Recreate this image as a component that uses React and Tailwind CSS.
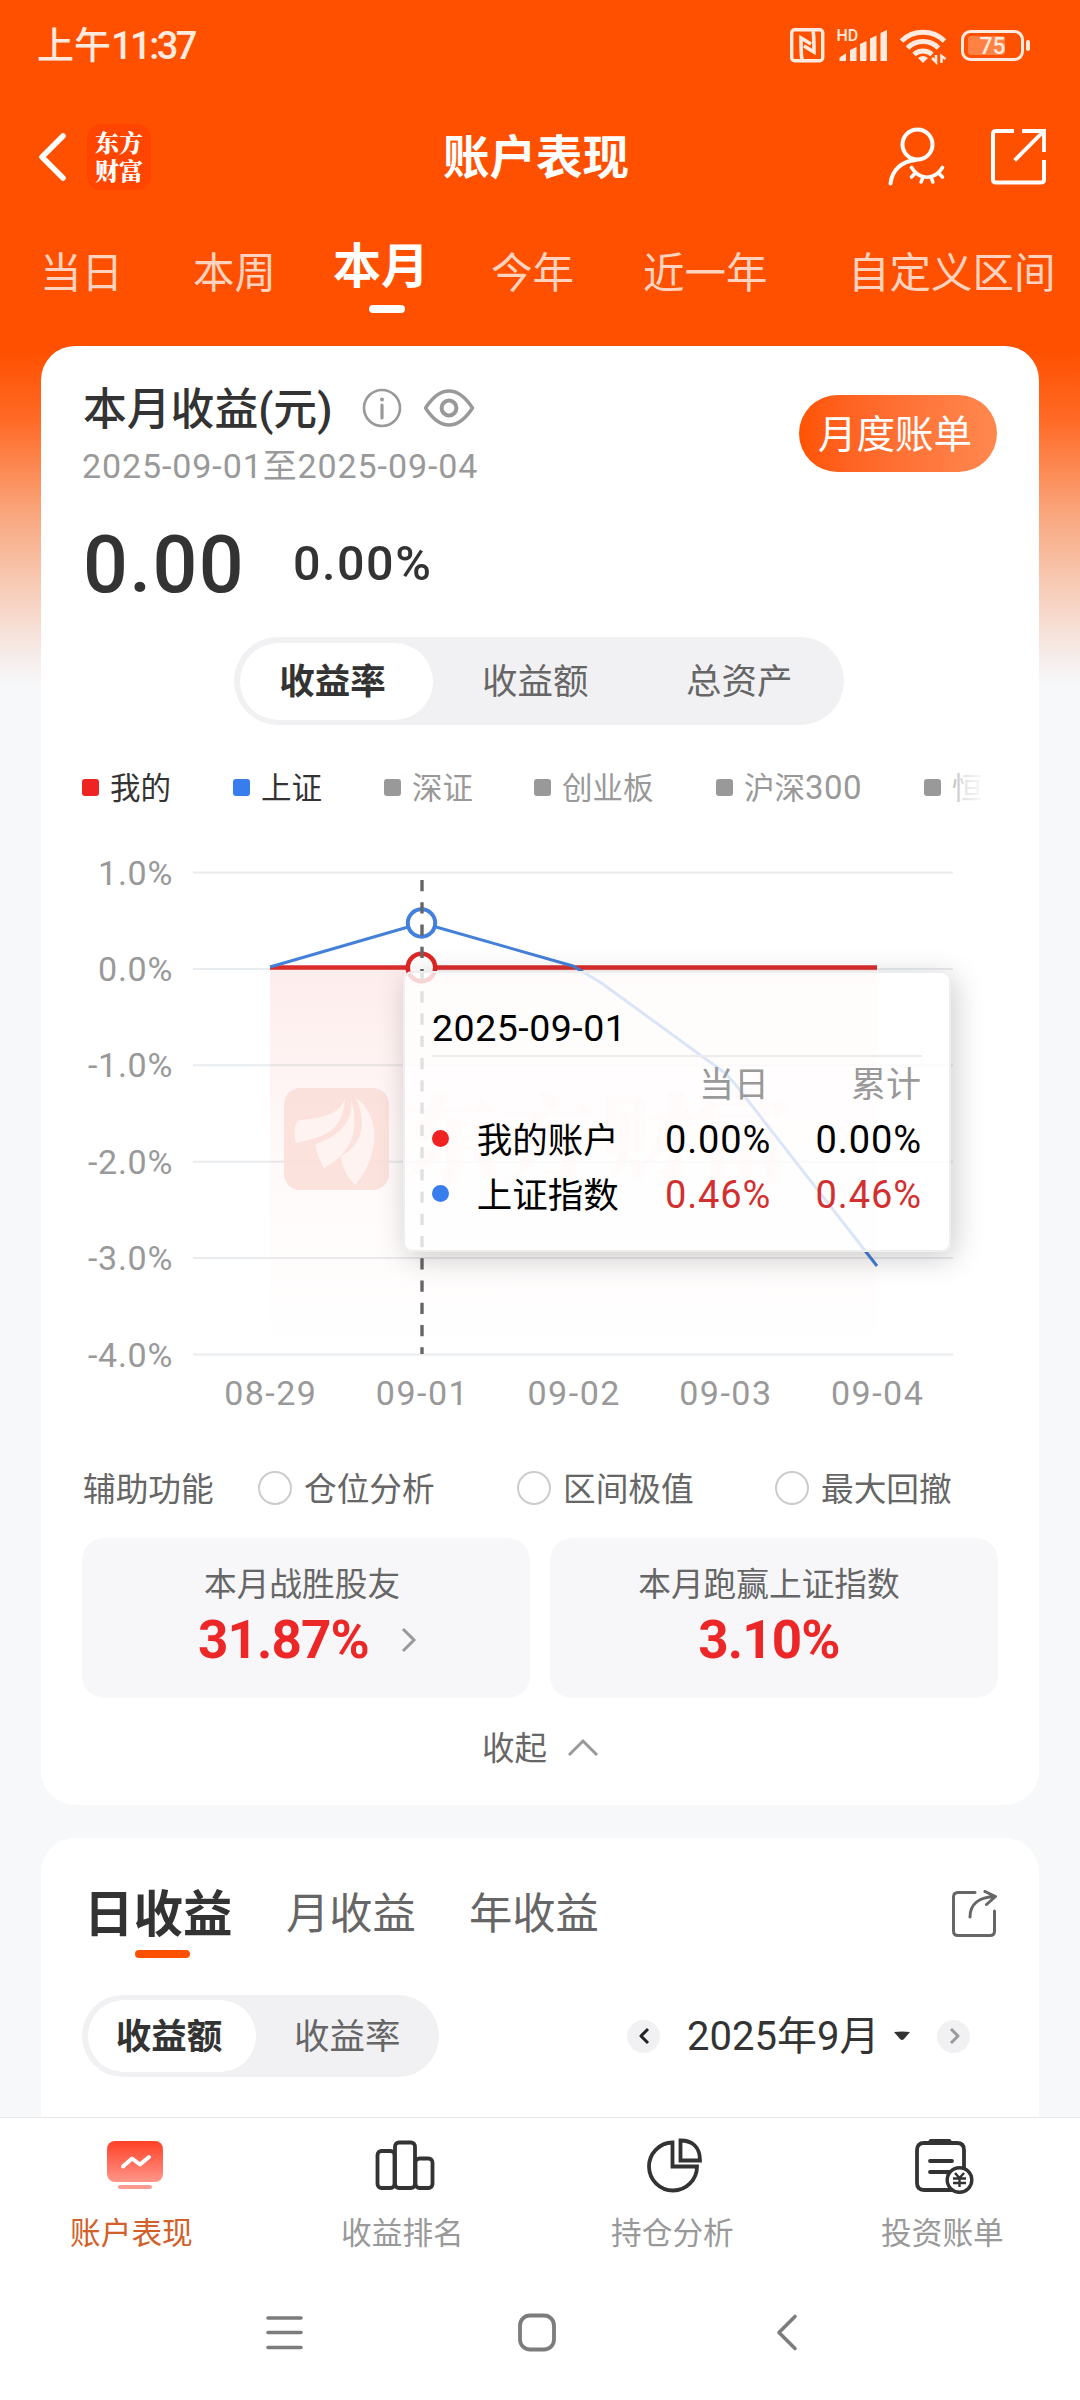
import React from "react";

const periods = [
  { label: "当日", cls: "ml-[40px] w-[153px]" },
  { label: "本周", cls: "w-[140px]" },
  { label: "本月", cls: "w-[158px]", active: true },
  { label: "今年", cls: "w-[152px]" },
  { label: "近一年", cls: "w-[205px]" },
  { label: "自定义区间", cls: "" },
];

const legend = [
  { label: "我的", box: "bg-[#f02323]", text: "text-[#333]", cls: "w-[151px]" },
  { label: "上证", box: "bg-[#387ded]", text: "text-[#333]", cls: "w-[151px]" },
  { label: "深证", box: "bg-[#999]", text: "text-[#999]", cls: "w-[150px]" },
  { label: "创业板", box: "bg-[#999]", text: "text-[#999]", cls: "w-[182px]" },
  { label: "沪深300", box: "bg-[#999]", text: "text-[#999]", cls: "w-[208px]" },
  { label: "恒", box: "bg-[#999]", text: "text-[#999]", cls: "w-[64px]" },
];

function StatusBar() {
  return (
    <div className="flex h-[90px] items-center pl-[37px] text-[#ffeadf]">
      <span className="mt-[3px] w-[751px] whitespace-nowrap text-[37px] font-medium leading-[40px]">
        上午<span className="text-[38px] tracking-[-2.500px]">11:37</span>
      </span>
      <svg width="244" height="44" viewBox="788 24 244 44" fill="none" stroke="currentColor" className="mt-[2px]">
        <rect x="791.700" y="29.700" width="31" height="31" rx="3" strokeWidth="3.400" />
        <path d="M802 60c-1-5-1-17-1-22l10 6M813 30c1 5 1 17 1 22l-10-6" strokeWidth="3.600" />
        <text x="836.500" y="40.500" fontSize="16" fontWeight="500" fill="currentColor" stroke="none">HD</text>
        <g fill="currentColor" stroke="none">
          <path d="M839.500 61v-3.500l6.500-4V61z" />
          <path d="M850 61V50l6.500-3V61z" />
          <path d="M860 61V44l6.500-3V61z" />
          <path d="M870 61V38.500l6.500-3V61z" />
          <path d="M880.500 61V33l6.500-3V61z" />
        </g>
        <g strokeWidth="5">
          <path d="M901.500 41a31 31 0 0 1 43 0" />
          <path d="M907.500 48a22 22 0 0 1 31 0" />
          <path d="M914 54.500a13.500 13.500 0 0 1 18 0" />
        </g>
        <path d="M918 58q5-4 10 0l-5 5z" fill="currentColor" stroke="none" />
        <path d="M936 55v7l-4-4M941.500 63v-7l4 3" strokeWidth="2.600" />
        <rect x="962.500" y="31.500" width="60" height="28" rx="8" strokeWidth="3" />
        <rect x="968" y="36" width="37" height="19" rx="3" fill="#ff8244" stroke="none" />
        <path d="M1028 42v7" strokeWidth="4" strokeLinecap="round" />
        <text x="979.500" y="54" fontSize="23" fontWeight="500" fill="currentColor" stroke="none">75</text>
      </svg>
    </div>
  );
}

function NavBar() {
  return (
    <div className="flex h-[134px] items-center text-white">
      <svg width="32" height="54" viewBox="0 0 32 54" className="ml-[37px]" fill="none" stroke="currentColor" strokeWidth="5.500" strokeLinecap="round" strokeLinejoin="round">
        <path d="M26 6 L5 27 L26 48" />
      </svg>
      <div className="ml-[18px] flex h-[66px] w-[64px] flex-col items-center justify-center rounded-[14px] bg-[#ff4500] text-[24px] font-black leading-[28px] [font-family:'Noto_Serif_CJK_SC','Noto_Sans_CJK_SC',serif]">
        <span className="relative top-[-1px]">东方</span>
        <span className="relative top-[-1px]">财富</span>
      </div>
      <span className="ml-[292px] mt-[2px] w-[186px] whitespace-nowrap text-[46.500px] font-bold leading-[50px]">账户表现</span>
      <svg width="62" height="62" viewBox="886 125 62 62" className="ml-[257px] mt-[-2px]" fill="none" stroke="currentColor" strokeWidth="4" strokeLinecap="round">
        <circle cx="917.500" cy="144.500" r="15" />
        <path d="M916 160C902 161 892 170 890.500 183.500" />
        <path d="M911.500 167.500c8 13 23 13 31 0M916 172.500l-4.500 4.500M923 177l-1.800 5M931 177l1.800 5M938 172.500l4.500 4.500" strokeWidth="3.600" />
      </svg>
      <svg width="60" height="60" viewBox="989 126 60 60" className="ml-[41px] mt-[-2px]" fill="none" stroke="currentColor" strokeWidth="4">
        <path d="M1014 131H996q-3 0-3 3v45.500q0 3 3 3h45q3 0 3-3V160" />
        <path d="M1024 131h20v19M1043 132L1016 159" strokeLinecap="square" strokeWidth="3.800" />
      </svg>
    </div>
  );
}

function PeriodTabs() {
  return (
    <div className="flex h-[122px] items-start whitespace-nowrap">
      {periods.map((p) =>
        p.active ? (
          <div key={p.label} className={`${p.cls} pt-[16px] text-[48px] font-bold leading-[54px] text-white`}>
            {p.label}
            <div className="ml-[36px] mt-[11px] h-[8px] w-[36px] rounded-full bg-white" />
          </div>
        ) : (
          <div key={p.label} className={`${p.cls} pt-[25px] text-[41.500px] leading-[50px] text-[#ffd3bf]`}>{p.label}</div>
        )
      )}
    </div>
  );
}

function Chart() {
  const rows = ["1.0%", "0.0%", "-1.0%", "-2.0%", "-3.0%", "-4.0%"];
  const days = ["08-29", "09-01", "09-02", "09-03", "09-04"];
  return (
    <svg width="998" height="590" viewBox="41 830 998 590" className="block" fill="none">
      <defs>
        <linearGradient id="area" x1="0" y1="0" x2="0" y2="1">
          <stop offset="0" stopColor="#f02323" stopOpacity="0.085" />
          <stop offset="0.5" stopColor="#f05023" stopOpacity="0.03" />
          <stop offset="1" stopColor="#f05023" stopOpacity="0" />
        </linearGradient>
      </defs>
      {rows.map((r, i) => (
        <g key={r}>
          <path d={`M193 ${872.500 + i * 96.400}H953`} stroke="#e9ecef" strokeWidth="2" />
          <text x="173" y={884.500 + i * 96.400} fontSize="34" letterSpacing="0.700" fill="#999" textAnchor="end">{r}</text>
        </g>
      ))}
      {days.map((d, i) => (
        <text key={d} x={270.800 + i * 151.700} y="1404.500" fontSize="34" letterSpacing="1.500" fill="#999" textAnchor="middle">{d}</text>
      ))}
      <rect x="270" y="968" width="607" height="386" fill="url(#area)" />
      <rect x="284" y="1088" width="105" height="102" rx="16" fill="#fbdfd9" fillOpacity="0.9" />
      <g fill="#fef3f1">
        <path d="M345 1098C342 1110 330 1118 300 1120C294 1122 293 1134 296 1143C318 1137 343 1136 345 1098Z" />
        <path d="M350 1096C357 1122 335 1138 316 1144C316 1154 321 1162 324 1168C342 1158 364 1140 350 1096Z" />
        <path d="M356 1098C370 1130 357 1148 341 1156C342 1170 349 1178 355 1185C372 1168 388 1122 356 1098Z" />
      </g>
      <text x="402" y="1175" fontSize="98" fontWeight="900" fill="#f05023" fillOpacity="0.075" fontFamily="'Noto Serif CJK SC','Noto Sans CJK SC'">东方财富</text>
      <path d="M270 967.500H877" stroke="#dc2d2d" strokeWidth="4.500" />
      <path d="M270 967L422 923L573 966L600 982L725 1073L735 1084L877 1266" stroke="#4580d8" strokeWidth="3" strokeLinejoin="round" />
      <circle cx="421.500" cy="923" r="13.700" fill="#fff" stroke="#4380de" strokeWidth="4" />
      <circle cx="421.500" cy="967.500" r="13.700" fill="#fff" stroke="#e02626" strokeWidth="4.500" />
      <path d="M422 880V1354" stroke="#666" strokeWidth="3.400" strokeDasharray="11.200 11.050" />
    </svg>
  );
}

function TooltipRow({ dot, name, day, total, color }) {
  return (
    <div className="flex h-[55px] items-center whitespace-nowrap text-[35.500px] leading-[50px]">
      <span className={`size-[17px] rounded-full ${dot}`} />
      <span className="ml-[28px] mt-[4px] w-[152px] text-black">{name}</span>
      <span className={`mt-[2px] w-[145px] text-right text-[38px] tracking-[0.900px] ${color}`}>{day}</span>
      <span className={`mt-[2px] w-[152px] text-right text-[38px] tracking-[0.900px] ${color}`}>{total}</span>
    </div>
  );
}

function Tooltip() {
  return (
    <div className="absolute left-[362px] top-[141px] h-[281px] w-[548px] rounded-[9px] border-2 border-[#eee] bg-white/80 px-[27px] pt-[32px] shadow-[4px_6px_30px_rgba(0,0,0,0.2)]">
      <div className="h-[52px] border-b-2 border-[#ebebeb] text-[37.500px] leading-[46px] tracking-[0.500px] text-black">2025-09-01</div>
      <div className="flex h-[54px] items-center text-[35px] leading-[50px] text-[#999]">
        <span className="mt-[4px] w-[337px] text-right">当日</span>
        <span className="mt-[4px] w-[152px] text-right">累计</span>
      </div>
      <TooltipRow dot="bg-[#f02323]" name="我的账户" day="0.00%" total="0.00%" color="text-black" />
      <TooltipRow dot="bg-[#387ded]" name="上证指数" day="0.46%" total="0.46%" color="text-[#d23030]" />
    </div>
  );
}

function Radio({ label, cls }) {
  return (
    <div className={`flex items-center ${cls}`}>
      <span className="size-[34px] rounded-full border-[2.500px] border-[#ccc]" />
      <span className="ml-[12px] mt-[3px] whitespace-nowrap">{label}</span>
    </div>
  );
}

function SummaryCard() {
  return (
    <section className="mx-[41px] h-[1459px] rounded-[34px] bg-white text-[#333]">
      <div className="flex h-[166px] pl-[42px]">
        <div className="w-[716px]">
          <div className="flex h-[95px] items-center whitespace-nowrap pt-[29px]">
            <span className="mt-[3px] w-[279px] text-[43.800px] font-medium leading-[56px]">本月收益(元)</span>
            <svg width="40" height="40" viewBox="0 0 40 40" fill="none" stroke="#999" strokeWidth="2.600">
              <circle cx="20" cy="20" r="18" />
              <path d="M20 17v13" strokeWidth="3.200" strokeLinecap="round" />
              <circle cx="20" cy="11.500" r="2" fill="#999" stroke="none" />
            </svg>
            <svg width="52" height="40" viewBox="0 0 52 40" className="ml-[21px]" fill="none" stroke="#999" strokeWidth="3.400">
              <path d="M2.500 20C9 10 16 3 26 3s17 7 23.500 17C43 30 36 37 26 37S9 30 2.500 20Z" strokeLinejoin="round" />
              <circle cx="26" cy="20" r="7.400" strokeWidth="4" />
            </svg>
          </div>
          <div className="ml-[-1px] whitespace-nowrap text-[34px] leading-[50px] tracking-[0.900px] text-[#999]">2025-09-01至2025-09-04</div>
        </div>
        <div className="mt-[49px] flex h-[77px] w-[198px] items-center justify-center whitespace-nowrap rounded-full bg-gradient-to-r from-[#ff5400] to-[#ff884f] pr-[6px] pt-[3px] text-[38.500px] leading-[50px] text-white">月度账单</div>
      </div>
      <div className="flex h-[125px] items-baseline pl-[42px]">
        <span className="relative top-[-2px] w-[210px] text-[79px] font-medium leading-[110px] tracking-[1.300px]">0.00</span>
        <span className="relative top-[-14px] text-[48.500px] font-medium leading-[60px] tracking-[1.500px]">0.00%</span>
      </div>
      <div className="ml-[193px] flex h-[88px] w-[610px] items-center whitespace-nowrap rounded-full bg-[#f1f1f4] pl-[6px] text-[35.500px] leading-[50px] text-[#666]">
        <span className="flex h-[77px] w-[193px] items-center justify-center rounded-full bg-white pr-[8px] pt-[2px] font-bold text-[#333]">收益率</span>
        <span className="w-[203px] pl-[49px] pt-[2px]">收益额</span>
        <span className="pl-[50px] pt-[2px]">总资产</span>
      </div>
      <div className="relative ml-[41px] mt-[37px] flex h-[50px] w-[906px] items-center whitespace-nowrap text-[30.500px] leading-[50px]">
        {legend.map((l) => (
          <div key={l.label} className={`flex shrink-0 items-center ${l.cls}`}>
            <span className={`h-[17px] w-[17px] rounded-[3px] ${l.box}`} />
            <span className={`ml-[11px] mt-[3px] ${l.text}`}>
              {l.label.replace(/\d+/, "")}
              {/\d/.test(l.label) && <span className="text-[33px] tracking-[0.500px]">300</span>}
            </span>
          </div>
        ))}
        <div className="absolute right-0 top-0 h-[50px] w-[46px] bg-gradient-to-r from-white/0 via-white/75 to-white" />
      </div>
      <div className="relative mt-[18px]">
        <Chart />
        <Tooltip />
      </div>
      <div className="mt-[43px] flex h-[50px] items-center whitespace-nowrap pl-[42px] text-[32.700px] leading-[50px] text-[#666]">
        <span className="mt-[3px] w-[175px]">辅助功能</span>
        <Radio label="仓位分析" cls="w-[259px]" />
        <Radio label="区间极值" cls="w-[258px]" />
        <Radio label="最大回撤" cls="" />
      </div>
      <div className="mx-[41px] mt-[25px] grid h-[160px] grid-cols-2 gap-[20px] whitespace-nowrap text-[32.700px] leading-[50px] text-[#666]">
        <div className="rounded-[22px] bg-[#f7f7fa] pl-[122px] pt-[22px]">
          <div>本月战胜股友</div>
          <div className="flex h-[60px] items-center text-[53px] font-bold leading-[62px] tracking-[-0.900px] text-[#eb2727]">
            <span className="-ml-[6px] w-[202px]">31.87%</span>
            <svg width="18" height="28" viewBox="0 0 18 28" fill="none" stroke="#999" strokeWidth="3"><path d="M3 3l11 11L3 25" /></svg>
          </div>
        </div>
        <div className="rounded-[22px] bg-[#f7f7fa] pr-[10px] pt-[22px] text-center">
          <div>本月跑赢上证指数</div>
          <div className="text-[53px] font-bold leading-[60px] tracking-[-0.900px] text-[#eb2727]">3.10%</div>
        </div>
      </div>
      <div className="mt-[25px] flex h-[50px] items-center pl-[441px] text-[32.500px] leading-[50px] text-[#666]">
        <span className="mt-[2px] w-[84px]">收起</span>
        <svg width="34" height="20" viewBox="0 0 34 20" fill="none" stroke="#999" strokeWidth="3" className="mt-[-1px]"><path d="M3 17L17 3l14 14" /></svg>
      </div>
    </section>
  );
}

function StepButton({ d, color }) {
  return (
    <span className="flex size-[33px] items-center justify-center rounded-full bg-[#f1f1f4]">
      <svg width="12" height="18" viewBox="0 0 12 18" fill="none" stroke={color} strokeWidth="3" strokeLinejoin="round"><path d={d} /></svg>
    </span>
  );
}

function IncomeCard() {
  return (
    <section className="mx-[41px] mt-[33px] h-[279px] rounded-t-[34px] bg-white text-[#333]">
      <div className="flex h-[121px] whitespace-nowrap pl-[43px] pt-[47px] text-[43.300px] leading-[60px] text-[#666]">
        <div className="w-[202px] text-[49.500px] font-bold text-[#333]">
          日收益
          <div className="ml-[51px] mt-[5px] h-[8px] w-[55px] rounded-full bg-[#ff5000]" />
        </div>
        <span className="w-[183px]">月收益</span>
        <span className="w-[480px]">年收益</span>
        <svg width="50" height="50" viewBox="950 1889 50 50" className="mt-[5px]" fill="none" stroke="#666" strokeWidth="3" strokeLinecap="round">
          <path d="M976 1891.500H959q-4.500 0-4.500 4.500v34q0 4.500 4.500 4.500h32q4.500 0 4.500-4.500v-20" />
          <path d="M971 1916c0-13 9-20 25-20.500M986 1890.500l10.500 5-9 8" strokeLinejoin="round" />
        </svg>
      </div>
      <div className="mt-[36px] flex h-[82px] items-center whitespace-nowrap pl-[41px]">
        <div className="flex h-[82px] w-[357px] items-center rounded-full bg-[#f1f1f4] pl-[6px] text-[35.500px] leading-[50px] text-[#666]">
          <span className="flex h-[72px] w-[168px] items-center justify-center rounded-full bg-white pr-[6px] pt-[2px] font-bold text-[#333]">收益额</span>
          <span className="pl-[38px] pt-[2px]">收益率</span>
        </div>
        <div className="ml-[188px] flex items-center">
          <StepButton color="#222" d="M10 2L3 9l7 7" />
          <span className="ml-[27px] mt-[2px] w-[206px] text-[40px] leading-[50px]">2025年9月</span>
          <svg width="18" height="10" viewBox="0 0 18 10" fill="#333"><path d="M1 1Q9 0 17 1L11 8Q9 10 7 8Z" /></svg>
          <span className="ml-[26px]"><StepButton color="#999" d="M3 2l7 7-7 7" /></span>
        </div>
      </div>
    </section>
  );
}

function BottomTab({ label, active, children, cls }) {
  return (
    <div className={`flex flex-col items-start ${cls}`}>
      <svg width="70" height="64" viewBox="0 0 70 64" className="ml-[27px]" fill="none" stroke="#333" strokeWidth="3.800">{children}</svg>
      <span className={`mt-[15px] whitespace-nowrap text-[30.700px] leading-[44px] ${active ? "text-[#d2602a]" : "text-[#999]"}`}>{label}</span>
    </div>
  );
}

function BottomBar() {
  return (
    <nav className="flex h-[165px] border-t border-[#e8e8e8] bg-white pl-[70px] pt-[15px]">
      <BottomTab label="账户表现" active cls="w-[271px]">
        <defs>
          <linearGradient id="tv" x1="0" y1="0" x2="0" y2="1"><stop offset="0" stopColor="#ff4127" /><stop offset="1" stopColor="#ff9689" /></linearGradient>
        </defs>
        <rect x="10" y="8" width="56" height="41" rx="8" fill="url(#tv)" stroke="none" />
        <path d="M26 33.500l9-8 8 6 9-7.500" stroke="#fff" strokeWidth="4" strokeLinecap="round" strokeLinejoin="round" />
        <path d="M23 54h30" stroke="#fa9a90" strokeWidth="4" strokeLinecap="round" />
      </BottomTab>
      <BottomTab label="收益排名" cls="w-[270px]">
        <rect x="9.500" y="18" width="17" height="37" rx="4" />
        <rect x="27" y="9.500" width="20" height="45.500" rx="4" />
        <rect x="47.500" y="25.500" width="17" height="29.500" rx="4" />
      </BottomTab>
      <BottomTab label="持仓分析" cls="w-[270px]">
        <path d="M34.500 9.500A24 24 0 1 0 59 33.500H34.500Z" />
        <path d="M42.500 7.500V27.500H62C62 14 54 7.500 42.500 7.500Z" />
      </BottomTab>
      <BottomTab label="投资账单" cls="">
        <path d="M44 57H16q-7 0-7-7V17q0-7 7-7h33q7 0 7 7v18" />
        <path d="M23 8.500h18" strokeWidth="5" strokeLinecap="round" />
        <path d="M22 28h22M22 39h20" strokeLinecap="round" />
        <circle cx="51.500" cy="47" r="12.300" fill="#fff" strokeWidth="3.400" />
        <path d="M47 40l4.500 5 4.500-5M51.500 45v9M45 45.500h13M45 50h13" strokeWidth="2.400" />
      </BottomTab>
    </nav>
  );
}

function SystemBar() {
  return (
    <div className="flex h-[118px] bg-white pl-[264px] pt-[28px] text-[#7c7c7c]">
      <svg width="41" height="44" viewBox="0 0 41 44" fill="none" stroke="currentColor" strokeWidth="3.600" strokeLinecap="round"><path d="M4 8h33M4 22.500h33M4 37.500h33" /></svg>
      <svg width="41" height="44" viewBox="0 0 41 44" className="ml-[211px]" fill="none" stroke="currentColor" strokeWidth="3.800"><rect x="4" y="5.500" width="34" height="34" rx="10" /></svg>
      <svg width="26" height="44" viewBox="0 0 26 44" className="ml-[217px]" fill="none" stroke="currentColor" strokeWidth="3.600" strokeLinecap="round" strokeLinejoin="round"><path d="M21 6.500L5 22.500l16 16" /></svg>
    </div>
  );
}

export default function App() {
  return (
    <div className="h-[2400px] w-[1080px] overflow-hidden bg-[#f7f8fa] bg-[linear-gradient(180deg,#ff5000_0px,#ff5000_350px,#ff6a26_420px,#f9a77e_515px,#f7cdb9_590px,#f6ece9_655px,#f7f8fa_685px)] [font-family:Roboto,'Noto_Sans_CJK_SC',sans-serif]">
      <StatusBar />
      <NavBar />
      <PeriodTabs />
      <SummaryCard />
      <IncomeCard />
      <BottomBar />
      <SystemBar />
    </div>
  );
}
